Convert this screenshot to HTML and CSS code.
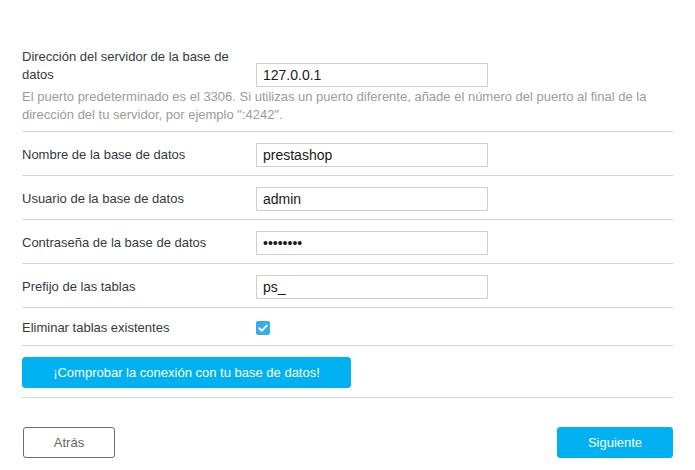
FILE: index.html
```html
<!DOCTYPE html>
<html lang="es">
<head>
<meta charset="utf-8">
<title>Base de datos</title>
<link rel="stylesheet" href="styles.css">
</head>
<body>
<div class="page">
  <form class="db-form">
    <div class="row row-first">
      <div class="field field-end">
        <label class="label label-two">Dirección del servidor de la base de datos</label>
        <input class="input" type="text" value="127.0.0.1">
      </div>
      <p class="help">El puerto predeterminado es el 3306. Si utilizas un puerto diferente, añade el número del puerto al final de la dirección del tu servidor, por ejemplo ":4242".</p>
    </div>
    <div class="row">
      <div class="field">
        <label class="label">Nombre de la base de datos</label>
        <input class="input" type="text" value="prestashop">
      </div>
    </div>
    <div class="row">
      <div class="field">
        <label class="label">Usuario de la base de datos</label>
        <input class="input" type="text" value="admin">
      </div>
    </div>
    <div class="row">
      <div class="field">
        <label class="label">Contraseña de la base de datos</label>
        <input class="input" type="password" value="12345678">
      </div>
    </div>
    <div class="row">
      <div class="field">
        <label class="label">Prefijo de las tablas</label>
        <input class="input" type="text" value="ps_">
      </div>
    </div>
    <div class="row">
      <div class="field">
        <label class="label">Eliminar tablas existentes</label>
        <span class="check"><svg viewBox="0 0 14 14" width="14" height="14"><path d="M3.3 7.2 L5.9 9.7 L10.8 4.6" fill="none" stroke="#fff" stroke-width="1.9" stroke-linecap="round" stroke-linejoin="round"/></svg></span>
      </div>
    </div>
    <div class="row row-btn">
      <button type="button" class="btn btn-blue btn-check">¡Comprobar la conexión con tu base de datos!</button>
    </div>
  </form>
  <div class="actions">
    <button type="button" class="btn btn-outline">Atrás</button>
    <button type="button" class="btn btn-blue">Siguiente</button>
  </div>
</div>
</body>
</html>
```
FILE: styles.css
```css
* { box-sizing: border-box; }
html, body { margin: 0; padding: 0; background: #fff; }
body {
  font-family: "Liberation Sans", Arial, sans-serif;
  font-size: 13px;
  color: #363a41;
}
.page {
  width: 651px;
  margin-left: 22px;
  padding-top: 48px;
}
.db-form { margin: 0; }
.row {
  border-bottom: 1px solid #d6d6d6;
  padding: 11px 0 8px;
}
.row-first { padding: 0 0 7px; }
.field {
  display: flex;
  align-items: center;
}
.field-end { align-items: flex-end; }
.label {
  width: 234px;
  padding-right: 15px;
  line-height: 18px;
  flex: none;
}
.label-two { padding-bottom: 3px; }
.input {
  width: 232px;
  height: 24px;
  border: 1px solid #cfcfcf;
  padding: 0 6px;
  font-family: "Liberation Sans", Arial, sans-serif;
  font-size: 14px;
  color: #1a1a1a;
  background: #fff;
  outline: none;
  margin: 0;
  border-radius: 0;
}
.help {
  margin: 1px 0 0;
  line-height: 18px;
  color: #9b9b9b;
}
.check {
  width: 14px;
  height: 14px;
  border-radius: 2px;
  background: #3aabe9;
  display: block;
  flex: none;
}
.check svg { display: block; }
.row-btn { padding: 11px 0 9px; }
.btn {
  height: 31px;
  padding: 0 31px;
  font-family: "Liberation Sans", Arial, sans-serif;
  font-size: 13px;
  border-radius: 3px;
  cursor: pointer;
  margin: 0;
}
.btn-blue {
  background: #00b0f0;
  border: 1px solid #00b0f0;
  color: #fff;
}
.btn-check { width: 329px; padding: 0; display: block; }
.btn-outline {
  background: #fff;
  border: 1px solid #6c6c6c;
  color: #666;
  width: 92px;
  padding: 0;
  margin-left: 1px;
}
.actions {
  display: flex;
  justify-content: space-between;
  margin-top: 29px;
}
.actions .btn-blue { width: 116px; padding: 0; }
```
